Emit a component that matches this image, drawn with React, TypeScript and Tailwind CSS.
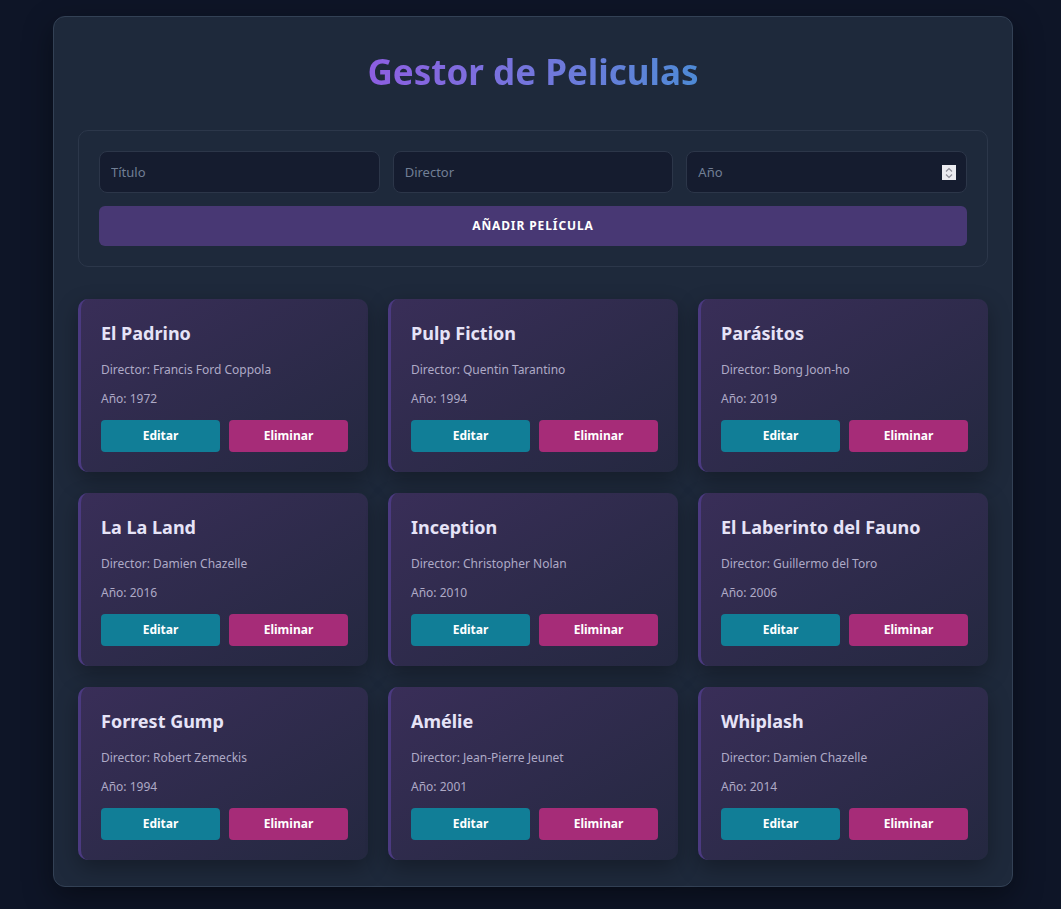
import React from 'react';

type Movie = { title: string; director: string; year: number };

const movies: Movie[] = [
  { title: 'El Padrino', director: 'Francis Ford Coppola', year: 1972 },
  { title: 'Pulp Fiction', director: 'Quentin Tarantino', year: 1994 },
  { title: 'Parásitos', director: 'Bong Joon-ho', year: 2019 },
  { title: 'La La Land', director: 'Damien Chazelle', year: 2016 },
  { title: 'Inception', director: 'Christopher Nolan', year: 2010 },
  { title: 'El Laberinto del Fauno', director: 'Guillermo del Toro', year: 2006 },
  { title: 'Forrest Gump', director: 'Robert Zemeckis', year: 1994 },
  { title: 'Amélie', director: 'Jean-Pierre Jeunet', year: 2001 },
  { title: 'Whiplash', director: 'Damien Chazelle', year: 2014 },
];

function MovieCard({ movie }: { movie: Movie }) {
  return (
    <div className="rounded-[10px] border-l-[3px] border-[#4b3a80] bg-gradient-to-br from-[#392e58] to-[#242840] px-[20px] pt-[21px] pb-[20px] shadow-[0_8px_22px_rgba(0,0,0,0.3)]">
      <h3 className="text-[18px] font-bold leading-[27px] text-[#e6e3f7]">{movie.title}</h3>
      <p className="mt-[13px] text-[12px] leading-[20px] text-[#aeaac6]">Director: {movie.director}</p>
      <p className="mt-[9px] text-[12px] leading-[20px] text-[#aeaac6]">Año: {movie.year}</p>
      <div className="mt-[11px] flex gap-[9px]">
        <button className="h-[32px] flex-1 rounded-[4px] bg-[#117e97] text-[12px] font-bold text-white">
          Editar
        </button>
        <button className="h-[32px] flex-1 rounded-[4px] bg-[#a62c78] text-[12px] font-bold text-white">
          Eliminar
        </button>
      </div>
    </div>
  );
}

const inputClass =
  'h-[42px] w-full rounded-[8px] border border-[#2c3649] bg-[#151c2f] px-[11px] text-[13px] text-[#cbd5e1] placeholder-[#717f95] outline-none';

export default function App() {
  return (
    <div
      className="min-h-screen bg-[#0e1527] pt-[16px] pb-[23px] pl-[5px]"
      style={{ fontFamily: '"Noto Sans", "Open Sans", sans-serif' }}
    >
      <div className="mx-auto w-[960px] rounded-[12px] border border-[#334155] bg-[#1e293b] px-[24px] pt-[24px] pb-[26px] shadow-[0_10px_30px_rgba(0,0,0,0.4)]">
        <h1 className="mt-[4px] mb-[31px] text-center text-[35px] font-bold leading-[54px]">
          <span className="bg-gradient-to-r from-[#8d5ee2] to-[#4d8ad6] bg-clip-text text-transparent">
            Gestor de Peliculas
          </span>
        </h1>

        {/* Formulario */}
        <div className="mb-[32px] rounded-[10px] border border-[#2c374a] bg-[#1e293b] p-[20px]">
          <div className="grid grid-cols-3 gap-[13px]">
            <input type="text" placeholder="Título" className={inputClass} />
            <input type="text" placeholder="Director" className={inputClass} />
            <div className="relative">
              <input type="number" placeholder="Año" className={inputClass} />
              {/* flechas del input numérico */}
              <div className="pointer-events-none absolute top-[14px] right-[11px] flex h-[15px] w-[14px] flex-col items-center justify-center bg-[#ebebf0]">
                <svg width="8" height="12" viewBox="0 0 8 12" fill="none" stroke="#8e8e98" strokeWidth="1.2">
                  <path d="M1 4.5 L4 1.5 L7 4.5" />
                  <path d="M1 7.5 L4 10.5 L7 7.5" />
                </svg>
              </div>
            </div>
          </div>
          <button className="mt-[13px] h-[40px] w-full rounded-[6px] bg-[#483874] text-[12px] font-bold tracking-[0.075em] text-white">
            AÑADIR PELÍCULA
          </button>
        </div>

        {/* Lista de películas */}
        <div className="grid grid-cols-3 gap-x-[20px] gap-y-[21px]">
          {movies.map((m) => (
            <MovieCard key={m.title} movie={m} />
          ))}
        </div>
      </div>
    </div>
  );
}
